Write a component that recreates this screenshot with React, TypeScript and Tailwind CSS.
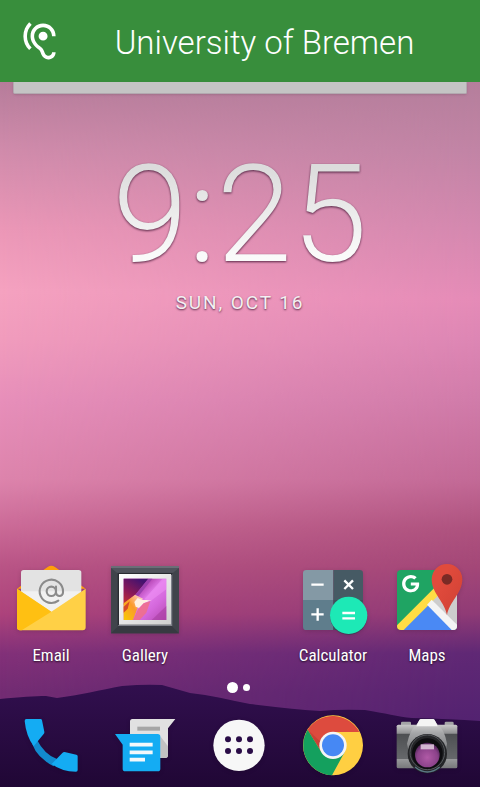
import type { ReactNode } from "react";
import { AtSign } from "lucide-react";
import { MdHearing } from "react-icons/md";
import { FaGoogle } from "react-icons/fa";

function Wallpaper() {
  return (
    <svg
      className="absolute inset-0 -z-10 h-full w-full"
      viewBox="0 0 480 787"
      preserveAspectRatio="none"
      aria-hidden="true"
    >
      <defs>
        <linearGradient id="skyLeft" gradientUnits="userSpaceOnUse" x1="0" y1="0" x2="0" y2="787">
          <stop offset="0.1" stopColor="#b57c9a" />
          <stop offset="0.19" stopColor="#d08bab" />
          <stop offset="0.29" stopColor="#eb97b7" />
          <stop offset="0.37" stopColor="#f5a2c0" />
          <stop offset="0.43" stopColor="#f19cbd" />
          <stop offset="0.51" stopColor="#e78fba" />
          <stop offset="0.61" stopColor="#dd84ac" />
          <stop offset="0.67" stopColor="#cb6a97" />
          <stop offset="0.72" stopColor="#b95486" />
          <stop offset="0.78" stopColor="#ad437c" />
          <stop offset="0.83" stopColor="#833179" />
          <stop offset="0.88" stopColor="#732c73" />
        </linearGradient>
        <linearGradient id="skyRight" gradientUnits="userSpaceOnUse" x1="0" y1="0" x2="0" y2="787">
          <stop offset="0.1" stopColor="#b47e9b" />
          <stop offset="0.19" stopColor="#c184a5" />
          <stop offset="0.29" stopColor="#d488af" />
          <stop offset="0.38" stopColor="#e58bb7" />
          <stop offset="0.43" stopColor="#dd86b4" />
          <stop offset="0.51" stopColor="#d07ba9" />
          <stop offset="0.61" stopColor="#c26996" />
          <stop offset="0.67" stopColor="#ae527e" />
          <stop offset="0.72" stopColor="#a34777" />
          <stop offset="0.78" stopColor="#8f3b76" />
          <stop offset="0.83" stopColor="#5f2875" />
          <stop offset="0.92" stopColor="#522270" />
        </linearGradient>
        <linearGradient id="fade">
          <stop offset="0" stopColor="#000" />
          <stop offset="1" stopColor="#fff" />
        </linearGradient>
        <mask id="fadeMask">
          <rect width="480" height="787" fill="url(#fade)" />
        </mask>
        <linearGradient id="hill" x1="0" y1="0" x2="0" y2="1">
          <stop offset="0" stopColor="#310f4e" />
          <stop offset="1" stopColor="#200735" />
        </linearGradient>
      </defs>
      <rect width="480" height="787" fill="url(#skyLeft)" />
      <rect width="480" height="787" fill="url(#skyRight)" mask="url(#fadeMask)" />
      <path
        d="M0 699 C20 697 35 696 46 696 L57 698 C80 695 100 690 122 686 Q145 684 162 685 L190 693 C210 695 230 700 250 704 Q290 709 320 711 Q340 709 365 710 C385 713 398 717 412 718 Q450 719 480 721 V787 H0Z"
        fill="url(#hill)"
      />
    </svg>
  );
}

function Glyph({ children }: { children: ReactNode }) {
  return (
    <svg className="size-[72px] drop-shadow-sm" viewBox="0 0 216 216" aria-hidden="true">
      {children}
    </svg>
  );
}

function EmailIcon() {
  return (
    <Glyph>
      <path d="M6 74 L98 9 Q109 1 120 9 L212 74Z" fill="#ff9f0a" />
      <path d="M18 26 Q18 18 26 18 H191 Q199 18 199 26 V110 L109 150 L18 110Z" fill="#e3e3e3" />
      <path d="M18 82 H199 L109 150Z" fill="#f1f1f1" />
      <AtSign x={67} y={40} size={84} strokeWidth={1.8} color="#8b8b8b" />
      <path d="M6 74 L109 143 L212 74 V190 Q212 199 203 199 H15 Q6 199 6 190Z" fill="#ffd046" />
      <path d="M6 74 L109 143 L20 199 H15 Q6 199 6 190Z" fill="#ffc012" />
    </Glyph>
  );
}

function GalleryIcon() {
  return (
    <Glyph>
      <defs>
        <linearGradient id="art" x1="0" y1="0" x2="1" y2="1">
          <stop offset="0.3" stopColor="#b03fae" />
          <stop offset="0.5" stopColor="#e17bea" />
          <stop offset="0.7" stopColor="#d468dc" />
          <stop offset="1" stopColor="#b548b0" />
        </linearGradient>
        <linearGradient id="dusk" x1="0" y1="1" x2="0.6" y2="0">
          <stop offset="0" stopColor="#c8322e" />
          <stop offset="0.45" stopColor="#8c1a56" />
          <stop offset="1" stopColor="#43126f" />
        </linearGradient>
        <linearGradient id="flame" x1="0" y1="1" x2="1" y2="0">
          <stop offset="0" stopColor="#f7cb00" />
          <stop offset="0.5" stopColor="#fb9a2b" />
          <stop offset="1" stopColor="#ffd9e8" />
        </linearGradient>
        <linearGradient id="mat" x1="0" y1="0" x2="1" y2="1">
          <stop offset="0" stopColor="#ffffff" />
          <stop offset="1" stopColor="#cfcfcf" />
        </linearGradient>
      </defs>
      <rect x="6" y="6" width="204" height="202" fill="#40444b" />
      <path d="M6 6 H210 V12 H6Z" fill="#6b6e77" />
      <path d="M6 12 H210 L192 26 H24Z" fill="#50535c" />
      <path d="M6 208 H210 L186 184 H30Z" fill="#373a41" />
      <rect x="26" y="27" width="164" height="159" fill="#292b31" />
      <path d="M26 186 H190 V30 L186 34 V182 H30Z" fill="#7e818a" />
      <rect x="30" y="30" width="156" height="152" fill="url(#mat)" />
      <rect x="44" y="44" width="128" height="124" fill="url(#art)" />
      <path d="M44 44 H118 L76 96 L44 122Z" fill="url(#dusk)" />
      <path d="M118 44 H130 L84 102 L70 104Z" fill="#9b3fae" />
      <path d="M44 118 L78 92 L102 104 L88 126 L72 168 H44Z" fill="url(#flame)" />
      <path d="M44 128 L62 112 L56 134 L44 146Z" fill="#d64a2a" />
      <path d="M76 114 L86 102 L100 108 L128 108 L104 118 L90 132 L80 128Z" fill="#fff0e2" />
      <path d="M104 118 L124 112 L112 146 L92 168 H72 L86 138Z" fill="#ee6f8c" opacity="0.9" />
      <path d="M160 44 H172 V76 L124 112 L106 106Z" fill="#ef92f5" opacity="0.5" />
      <path d="M172 126 V168 H128Z" fill="#a83fa2" opacity="0.6" />
    </Glyph>
  );
}

function CalculatorIcon() {
  return (
    <Glyph>
      <path d="M28 18 H109 V108 H18 V28 Q18 18 28 18Z" fill="#8499a5" />
      <path d="M109 18 H188 Q198 18 198 28 V108 H109Z" fill="#465a64" />
      <path d="M18 108 H109 V198 H28 Q18 198 18 188Z" fill="#5f7d8c" />
      <path d="M109 108 H198 V188 Q198 198 188 198 H109Z" fill="#3d525c" />
      <path d="M43 62 H80 M43 151 H80 M62 133 V170 M142 49 L168 75 M168 49 L142 75" stroke="#fff" strokeWidth="7" />
      <circle cx="155" cy="157" r="56" fill="#233b46" opacity="0.5" />
      <circle cx="155" cy="154" r="56" fill="#1de9b6" />
      <path d="M136 147 H174 M136 163 H174" stroke="#fff" strokeWidth="7" />
    </Glyph>
  );
}

function MapsIcon() {
  return (
    <Glyph>
      <defs>
        <clipPath id="tile">
          <rect x="18" y="18" width="180" height="180" rx="12" />
        </clipPath>
        <linearGradient id="pin" x1="0" y1="0" x2="1" y2="1">
          <stop offset="0.3" stopColor="#e14b3c" />
          <stop offset="1" stopColor="#cf4034" />
        </linearGradient>
      </defs>
      <g clipPath="url(#tile)">
        <rect x="18" y="18" width="180" height="180" fill="#1fa463" />
        <path d="M108 108 L198 18 V198 H108Z" fill="#cdcdcd" />
        <path d="M26 206 L112 120 L198 206Z" fill="#4a89f4" />
        <path d="M14 188 L144 58 L160 76 L30 206Z" fill="#ffdd44" />
        <path d="M108 122 L122 107 L206 190 L188 204Z" fill="#f4f4f4" />
      </g>
      <FaGoogle x={32} y={32} size={54} color="#fff" />
      <path d="M168 154 C163 116 122 88 122 46 A46 46 0 0 1 214 46 C214 88 173 116 168 154Z" fill="url(#pin)" />
      <circle cx="168" cy="46" r="16" fill="#7a2a25" />
    </Glyph>
  );
}

function PhoneIcon() {
  return (
    <Glyph>
      <path d="M52 106 L66 92 Q88 136 126 150 L116 172 Q66 146 52 106Z" fill="#128ace" />
      <path d="M34 30 H77 Q80 30 81 34 L88 68 Q89 72 86 75 L56 112 Q33 80 29 36 Q29 30 34 30Z" fill="#14acf3" />
      <path d="M183 188 Q188 188 188 183 V142 Q188 138 184 137 L152 130 Q146 128 142 132 L110 165 Q140 188 183 188Z" fill="#14acf3" />
    </Glyph>
  );
}

function MessagesIcon() {
  return (
    <Glyph>
      <path d="M70 30 H199 L177 58 V138 Q177 147 168 147 H72 Q63 147 63 138 V38 Q63 30 70 30Z" fill="#e1e1e1" />
      <path d="M154 82 L177 112 V138 Q177 147 168 147 H154Z" fill="#c2c2c2" />
      <rect x="85" y="53" width="68" height="12" fill="#a6a6a6" />
      <path d="M18 75 H146 Q154 75 154 83 V179 Q154 187 146 187 H49 Q41 187 41 179 V107Z" fill="#14acf3" />
      <path d="M62 107 H131 M62 130 H131 M62 152 H108" stroke="#f3f8fb" strokeWidth="11" />
    </Glyph>
  );
}

function AllAppsIcon() {
  return (
    <Glyph>
      <circle cx="108" cy="109" r="77" fill="#f7f7f7" />
      {[91, 126].map((y) =>
        [75, 108, 141].map((x) => <circle key={`${x}-${y}`} cx={x} cy={y} r="9" fill="#2a0c47" />)
      )}
    </Glyph>
  );
}

function ChromeIcon() {
  return (
    <Glyph>
      <circle cx="108" cy="109" r="90" fill="#ffcf42" />
      <path d="M108 69 H187 A90 90 0 0 0 32 62 L73 129 L108 109Z" fill="#dd4b3e" />
      <path d="M32 62 A90 90 0 0 0 105 199 L143 129 L108 109 L73 129Z" fill="#14a05e" />
      <path d="M32 62 L69 97 L71 125Z" fill="#b8392f" opacity="0.5" />
      <circle cx="108" cy="109" r="41" fill="#f5f5f5" />
      <circle cx="108" cy="109" r="33" fill="#4688f4" />
    </Glyph>
  );
}

function CameraIcon() {
  return (
    <Glyph>
      <defs>
        <linearGradient id="body" x1="0" y1="0" x2="0" y2="1">
          <stop offset="0" stopColor="#c9c9c9" />
          <stop offset="0.2" stopColor="#8f9092" />
          <stop offset="0.21" stopColor="#4d4f52" />
          <stop offset="0.78" stopColor="#66686b" />
          <stop offset="0.79" stopColor="#98999b" />
          <stop offset="1" stopColor="#77787a" />
        </linearGradient>
        <linearGradient id="prism" x1="0" y1="0" x2="0" y2="1">
          <stop offset="0" stopColor="#e4e4e4" />
          <stop offset="0.3" stopColor="#a5a6a8" />
          <stop offset="1" stopColor="#5c5e61" />
        </linearGradient>
        <radialGradient id="lens" cx="0.5" cy="0.6" r="0.6">
          <stop offset="0" stopColor="#b05aa6" />
          <stop offset="0.7" stopColor="#8a4189" />
          <stop offset="1" stopColor="#4a2453" />
        </radialGradient>
      </defs>
      <rect x="30" y="38" width="30" height="14" rx="4" fill="#a4a5a6" />
      <rect x="161" y="38" width="27" height="14" rx="4" fill="#a4a5a6" />
      <rect x="17" y="47" width="182" height="131" rx="5" fill="url(#body)" />
      <path d="M90 30 H126 Q130 30 132 35 L140 48 Q160 60 168 104 L156 170 H62 L48 104 Q58 60 76 48 L84 35 Q86 30 90 30Z" fill="url(#prism)" />
      <path d="M90 30 H126 Q130 30 132 35 L140 52 H76 L84 35 Q86 30 90 30Z" fill="#f4f4f4" />
      <circle cx="109" cy="134" r="59" fill="#242528" />
      <circle cx="109" cy="130" r="52" fill="none" stroke="#55585c" strokeWidth="3" />
      <circle cx="109" cy="134" r="46" fill="#0d0d10" />
      <path d="M72 174 Q109 204 146 174" fill="none" stroke="#5b7886" strokeWidth="4" />
      <circle cx="109" cy="138" r="37" fill="url(#lens)" />
      <rect x="89" y="106" width="40" height="15" fill="#dcc4da" opacity="0.9" />
    </Glyph>
  );
}

const homeApps = [
  { name: "Email", icon: <EmailIcon />, column: "col-start-1" },
  { name: "Gallery", icon: <GalleryIcon />, column: "col-start-2" },
  { name: "Calculator", icon: <CalculatorIcon />, column: "col-start-4" },
  { name: "Maps", icon: <MapsIcon />, column: "col-start-5" },
];

const dockApps = [
  { name: "Phone", icon: <PhoneIcon /> },
  { name: "Messages", icon: <MessagesIcon /> },
  { name: "All apps", icon: <AllAppsIcon /> },
  { name: "Chrome", icon: <ChromeIcon /> },
  { name: "Camera", icon: <CameraIcon /> },
];

export default function App() {
  return (
    <div className="relative isolate flex min-h-screen flex-col overflow-hidden font-['Roboto',sans-serif] text-white">
      <Wallpaper />

      <header className="flex h-[82px] items-center bg-[#388e3c] pr-6 pl-[18px]">
        <MdHearing className="size-[43px] shrink-0" aria-hidden="true" />
        <h1 className="flex-1 pt-1 pl-3 text-center text-[33px] leading-10 font-light">University of Bremen</h1>
      </header>

      <div className="mx-[13px] h-3 rounded-b-xs border border-t-0 border-[#b3a9b0] bg-[#c4c4c4] shadow-sm" />

      <section className="mt-[53px] text-center">
        <time className="block bg-linear-to-b from-[#dcdcdc] from-15% to-[#fafafa] to-80% bg-clip-text text-[136px] leading-[136px] font-light text-transparent drop-shadow-[0_1px_1px_rgba(50,10,40,0.8)]">
          9:25
        </time>
        <p className="mt-2 text-[19px] leading-6 tracking-widest text-[#f4f0f2] text-shadow-[0_1px_2px_rgba(50,10,40,0.8)]">
          SUN, OCT 16
        </p>
      </section>

      <main className="mt-auto grid grid-cols-5 pr-[6px] pl-1">
        {homeApps.map((app) => (
          <button key={app.name} type="button" className={`${app.column} flex flex-col items-center gap-2`}>
            {app.icon}
            <span className="font-['Roboto_Condensed','Roboto',sans-serif] text-[17px] leading-[22px] text-shadow-[0_1px_2px_rgba(0,0,0,0.7)]">
              {app.name}
            </span>
          </button>
        ))}
      </main>

      <div className="mt-[15px] flex h-3 items-center justify-center gap-[5px] pr-1">
        <span className="size-[11px] rounded-full bg-white" />
        <span className="size-[7px] rounded-full bg-white" />
      </div>

      <nav className="mt-4 mb-[6px] grid grid-cols-5 pr-[6px] pl-1" aria-label="Dock">
        {dockApps.map((app) => (
          <button key={app.name} type="button" aria-label={app.name} className="flex justify-center">
            {app.icon}
          </button>
        ))}
      </nav>
    </div>
  );
}
